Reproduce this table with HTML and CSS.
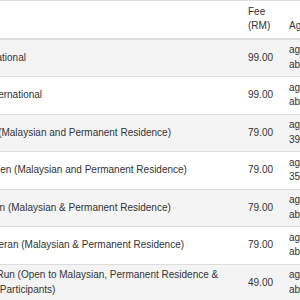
FILE: index.html
```html
<!DOCTYPE html>
<html lang="en">
<head>
<meta charset="utf-8">
<title>Race Categories</title>
<link rel="stylesheet" href="styles.css">
</head>
<body>
<div class="viewport">
  <table class="fees">
    <colgroup>
      <col class="col-cat">
      <col class="col-fee">
      <col class="col-age">
    </colgroup>
    <thead>
      <tr>
        <th>Category</th>
        <th>Fee (RM)</th>
        <th>Age</th>
      </tr>
    </thead>
    <tbody>
      <tr><td>42KM International</td><td>99.00</td><td>age 18 and<br>above</td></tr>
      <tr><td>Marathon International</td><td>99.00</td><td>age 18 and<br>above</td></tr>
      <tr><td>21KM Open (Malaysian and Permanent Residence)</td><td>79.00</td><td>age 18 to<br>39 years</td></tr>
      <tr><td>21KM - Women (Malaysian and Permanent Residence)</td><td>79.00</td><td>age 18 to<br>35 years</td></tr>
      <tr><td>42KM Women (Malaysian &amp; Permanent Residence)</td><td>79.00</td><td>age 18 and<br>above</td></tr>
      <tr><td>Men 40+ Veteran (Malaysian &amp; Permanent Residence)</td><td>79.00</td><td>age 40 and<br>above</td></tr>
      <tr><td>Charity Fun Run (Open to Malaysian, Permanent Residence &amp; International Participants)</td><td>49.00</td><td>age 12 and<br>above</td></tr>
    </tbody>
  </table>
</div>
</body>
</html>
```

FILE: styles.css
```css
html, body {
  margin: 0;
  padding: 0;
  overflow: hidden;
  background: #fff;
}
.viewport {
  width: 300px;
  height: 300px;
  overflow: hidden;
}
.fees {
  margin-left: -63px;
  width: 427px;
  table-layout: fixed;
  border-collapse: collapse;
  font-family: "Liberation Sans", Arial, sans-serif;
  font-size: 10px;
  line-height: 14.5px;
  color: #333;
}
.col-cat { width: 306px; }
.col-fee { width: 41px; }
.col-age { width: 80px; }
.fees th,
.fees td {
  padding: 3.75px 5px;
  text-align: left;
  border-top: 1px solid #ddd;
}
.fees th {
  font-weight: normal;
  vertical-align: bottom;
  border-bottom: 2px solid #ddd;
}
.fees td {
  vertical-align: middle;
  white-space: normal;
}
.fees tbody tr:nth-child(odd) td {
  background: #f4f4f4;
}
```
